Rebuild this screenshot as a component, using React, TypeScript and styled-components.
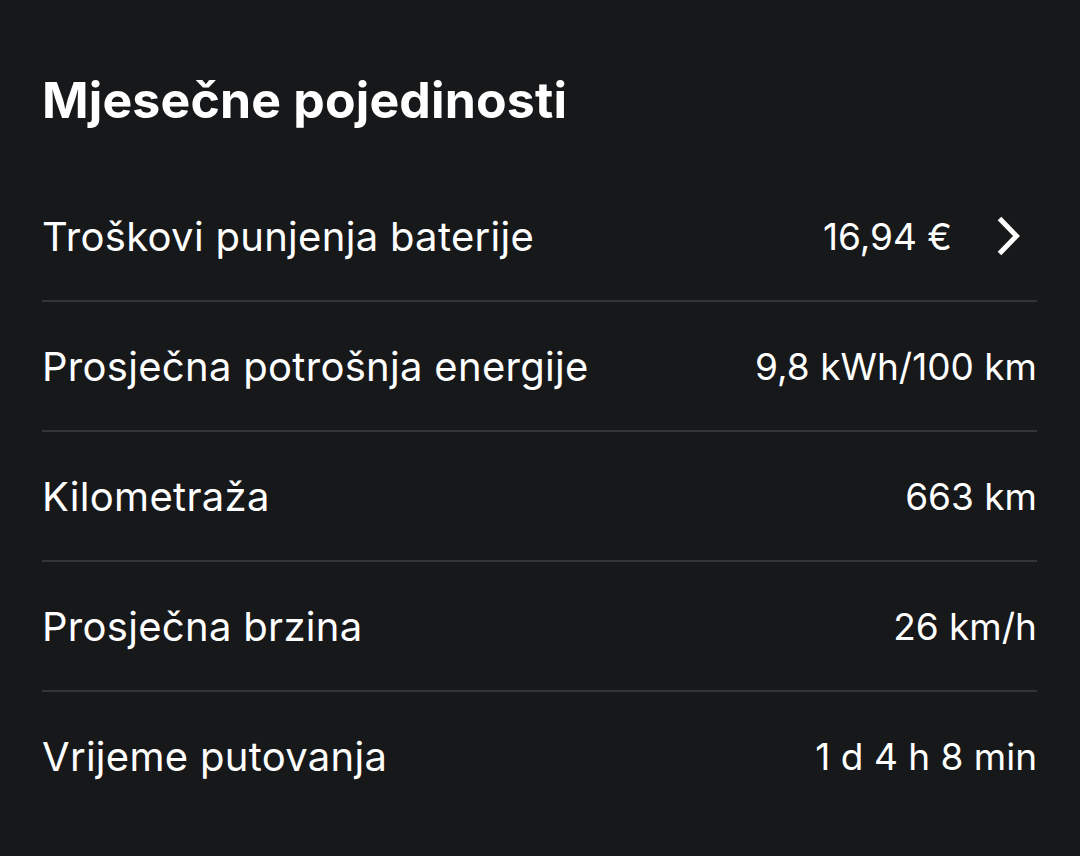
import React from "react";
import styled, { createGlobalStyle } from "styled-components";

const Global = createGlobalStyle`
  html, body { margin: 0; padding: 0; background: #17181a; }
  body { font-family: "Inter", "Noto Sans", sans-serif; color: #ffffff; }
`;

const Page = styled.div`
  width: 1080px;
  height: 856px;
  box-sizing: border-box;
  padding: 64px 43px 0 42px;
  background: #17181a;
`;

const Title = styled.h1`
  margin: 0 0 36px;
  font-size: 50px;
  line-height: 72px;
  font-weight: 700;
  letter-spacing: 0.15px;
`;

const List = styled.div`
  display: flex;
  flex-direction: column;
`;

const Row = styled.div<{ $last?: boolean }>`
  display: flex;
  align-items: center;
  justify-content: space-between;
  height: 128px;
  border-bottom: ${(p) => (p.$last ? "none" : "2px solid #333436")};
`;

const Label = styled.span`
  font-size: 40px;
  font-weight: 400;
  letter-spacing: 0.3px;
`;

const Value = styled.span`
  display: flex;
  align-items: center;
  gap: 45px;
  font-size: 37px;
  font-weight: 400;
`;

const ChevronIcon = styled.svg`
  display: block;
  margin-right: 17px;
`;

const Chevron = () => (
  <ChevronIcon width="23" height="40" viewBox="0 0 23 40" fill="none">
    <path d="M2.5 2.5 L19.5 20 L2.5 37.5" stroke="#fff" strokeWidth="5" strokeLinecap="butt" strokeLinejoin="miter" />
  </ChevronIcon>
);

const rows = [
  { label: "Troškovi punjenja baterije", value: "16,94 €", link: true },
  { label: "Prosječna potrošnja energije", value: "9,8 kWh/100 km" },
  { label: "Kilometraža", value: "663 km" },
  { label: "Prosječna brzina", value: "26 km/h" },
  { label: "Vrijeme putovanja", value: "1 d 4 h 8 min" },
];

export default function App() {
  return (
    <>
      <Global />
      <Page>
        <Title>Mjesečne pojedinosti</Title>
        <List>
          {rows.map((r, i) => (
            <Row key={r.label} $last={i === rows.length - 1}>
              <Label>{r.label}</Label>
              <Value>
                {r.value}
                {r.link && <Chevron />}
              </Value>
            </Row>
          ))}
        </List>
      </Page>
    </>
  );
}
